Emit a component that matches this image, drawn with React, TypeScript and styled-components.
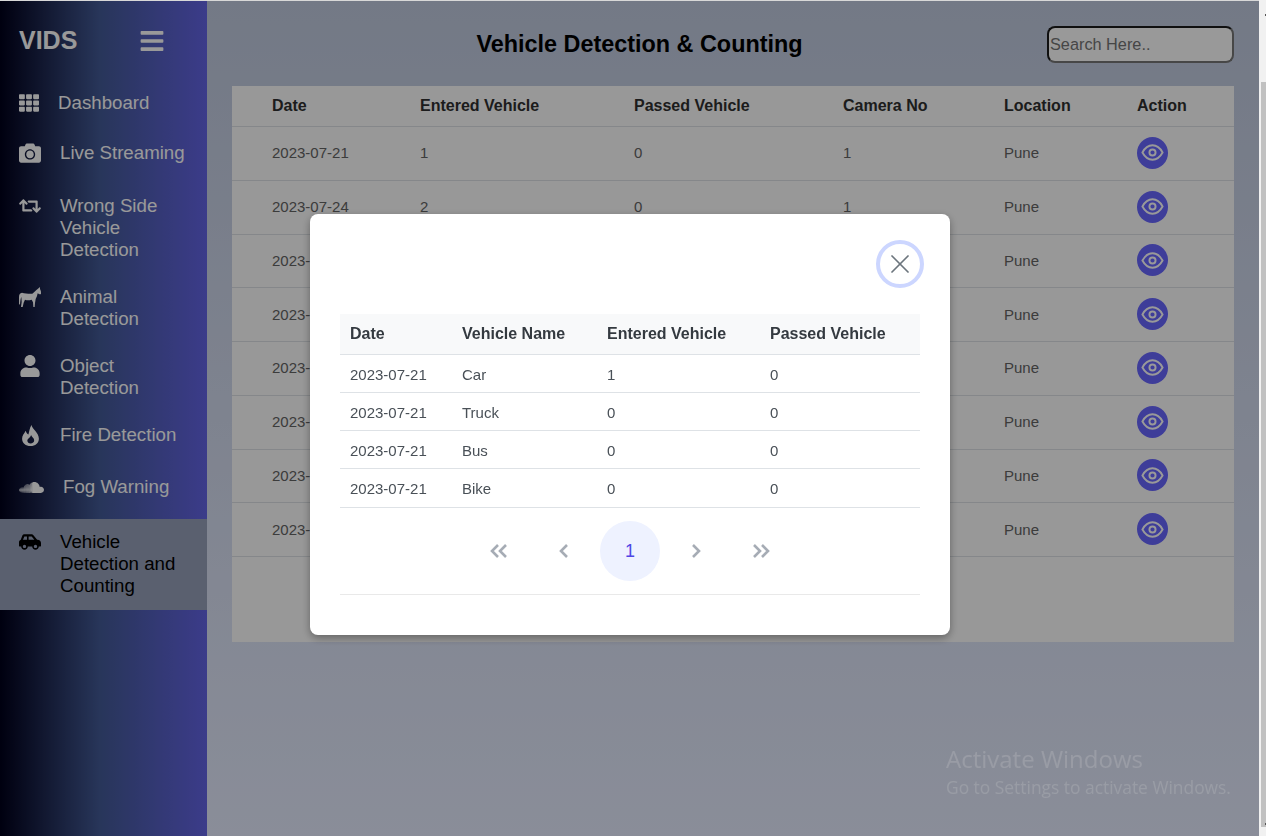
import React from "react";
import styled, { createGlobalStyle } from "styled-components";
import { FaBars, FaCamera, FaCarSide, FaRetweet, FaSoundcloud, FaTh, FaUser } from "react-icons/fa";
import { LuX } from "react-icons/lu";

const GlobalStyle = createGlobalStyle`
  html, body {
    margin: 0;
    height: 100%;
    overflow: hidden;
  }
  body {
    font-family: "Liberation Sans", Arial, sans-serif;
    background: #f1f1f1;
  }
`;

const Page = styled.div`
  display: flex;
  width: 1266px;
  height: 836px;
  overflow: hidden;
`;

const Content = styled.div`
  display: flex;
  flex: 1;
  padding-top: 1px;
  background: #d8d8d8;
`;

const Sidebar = styled.nav`
  width: 207px;
  flex-shrink: 0;
  background: linear-gradient(to right, #00001a 0%, #435a96 48%, #6464e6 100%);
  color: #fff;
`;

const Brand = styled.div`
  display: flex;
  align-items: center;
  justify-content: space-between;
  height: 79px;
  padding: 0 42px 0 19px;
  box-sizing: border-box;
  font-size: 25px;
  font-weight: 700;

  svg {
    font-size: 26px;
  }
`;

const MenuItem = styled.div<{ $iconWidth: number; $height?: number; $active?: boolean }>`
  display: flex;
  gap: 19px;
  box-sizing: border-box;
  height: ${(p) => (p.$height ? `${p.$height}px` : "auto")};
  padding: 12px 20px 13px 19px;
  font-size: 18.7px;
  line-height: 22px;
  color: ${(p) => (p.$active ? "#000" : "#fff")};
  background: ${(p) => (p.$active ? "#97a0ba" : "transparent")};

  > span:first-child {
    display: flex;
    align-items: center;
    justify-content: center;
    flex: 0 0 ${(p) => p.$iconWidth}px;
    height: 22px;
    font-size: ${(p) => p.$iconWidth}px;
  }
`;

const Main = styled.main`
  flex: 1;
  background: linear-gradient(to bottom, #c0cadf 0%, #e6ecff 100%);
  padding: 0 25px;
`;

const TopBar = styled.header`
  display: flex;
  align-items: center;
  height: 85px;
`;

const Title = styled.h1`
  flex: 1;
  margin: 2px 0 0;
  text-align: center;
  font-size: 23.4px;
  font-weight: 700;
  color: #000;
`;

const SearchInput = styled.input`
  width: 187px;
  height: 37px;
  box-sizing: border-box;
  padding: 0 1px;
  margin-top: 2px;
  border: 2px solid;
  border-color: #1c1c1c #777 #777 #1c1c1c;
  border-radius: 8px;
  background: #fff;
  font-family: inherit;
  font-size: 16.3px;
`;

const Panel = styled.section`
  height: 556px;
  background: #fdfdfd;
`;

const VehicleTable = styled.table`
  width: 100%;
  table-layout: fixed;
  border-collapse: separate;
  border-spacing: 0;
  color: #646464;

  th {
    height: 40px;
    text-align: left;
    padding: 0;
    font-size: 16px;
    color: #303030;
    border-bottom: 1px solid #dee2e6;
  }
  td {
    height: 51.75px;
    padding: 0 0 1px;
    font-size: 15px;
    border-bottom: 1px solid #dee2e6;
  }
  th:first-child,
  td:first-child {
    padding-left: 40px;
  }
`;

const EyeButton = styled.button`
  display: flex;
  align-items: center;
  justify-content: center;
  width: 31px;
  height: 32px;
  padding: 0;
  border: none;
  border-radius: 50%;
  background: #6866ff;
  color: #fff;
`;

const ScrollTrack = styled.div`
  position: relative;
  flex: 0 0 7px;
  background: #f1f1f1;
  padding-left: 2px;
  box-sizing: border-box;

  &::before,
  &::after {
    content: "";
    position: absolute;
    right: 0;
    width: 1px;
    height: 2px;
    background: #555;
  }
  &::before {
    top: 14px;
  }
  &::after {
    bottom: 11px;
  }
`;

const ScrollThumb = styled.div`
  height: 745px;
  margin-top: 82px;
  background: #c1c1c1;
`;

const Backdrop = styled.div`
  position: fixed;
  top: 1px;
  left: 0;
  width: 1259px;
  bottom: 0;
  display: flex;
  justify-content: center;
  align-items: flex-start;
  padding-top: 213px;
  box-sizing: border-box;
  background: rgba(0, 0, 0, 0.4);
`;

const Modal = styled.div`
  width: 640px;
  box-sizing: border-box;
  padding: 26px 30px 40px;
  margin-left: 1px;
  background: #fff;
  border-radius: 8px;
  box-shadow: 0 3px 8px rgba(0, 0, 0, 0.35);
`;

const ModalHead = styled.div`
  display: flex;
  justify-content: flex-end;
  margin-bottom: 26px;
`;

const CloseButton = styled.button`
  display: flex;
  align-items: center;
  justify-content: center;
  width: 48px;
  height: 48px;
  margin-right: -4px;
  padding: 0;
  border: 4px solid #ccd6ff;
  border-radius: 50%;
  background: #fff;
  color: #6c757d;
  font-size: 32px;

  svg {
    stroke-width: 1.3;
  }
`;

const DetailTable = styled.table`
  width: 100%;
  table-layout: fixed;
  border-collapse: separate;
  border-spacing: 0;

  th {
    height: 40px;
    padding: 0 0 0 10px;
    text-align: left;
    font-size: 16px;
    color: #343a40;
    background: #f8f9fa;
    border-bottom: 1px solid #dee2e6;
  }
  td {
    height: 36px;
    padding: 1px 0 0 10px;
    font-size: 15px;
    color: #495057;
    border-bottom: 1px solid #dee2e6;
  }
  tr:last-child td {
    height: 38px;
    padding-top: 0;
  }
`;

const Pagination = styled.div`
  display: flex;
  justify-content: center;
  gap: 6px;
  padding: 13px 0;
  border-bottom: 1px solid #e9e9e9;
`;

const PageButton = styled.div<{ $current?: boolean }>`
  display: flex;
  align-items: center;
  justify-content: center;
  width: 60px;
  height: 60px;
  border-radius: 50%;
  font-size: 18px;
  color: ${(p) => (p.$current ? "#4f46e5" : "#a6acb5")};
  background: ${(p) => (p.$current ? "#eef2ff" : "transparent")};
`;

const Watermark = styled.div`
  position: fixed;
  left: 946px;
  top: 743px;
  font-family: "Open Sans", sans-serif;
  font-size: 24px;
  line-height: 31px;
  color: #999ca5;

  small {
    display: block;
    font-size: 17.4px;
    line-height: 26px;
  }
`;

const HorseIcon = () => (
  <svg width="22" height="20" viewBox="0 0 66 60" fill="currentColor">
    <path d="M0 30 C0 22 3 18 9 17 C18 19 30 21 40 20 C46 16 51 10 56 6 L63 0 L63 6 C65 9 66 14 67 19 C66 22 63 23 60 21 L56 19 C55 25 53 31 50 36 L48 48 L47 60 L43 60 L42 46 L38 38 C30 40 24 40 18 38 L14 47 L11 60 L6 60 L8 45 L7 30 C5 34 4 42 3 54 L0 50 Z" />
  </svg>
);

const FlameIcon = () => (
  <svg width="17" height="21" viewBox="0 0 16 20" fill="currentColor" fillRule="evenodd">
    <path d="M9 0 C9.5 4 16 7 16 13 C16 17 12.5 20 8 20 C3.5 20 0 17 0 13 C0 10 2 8 3.5 5.5 C4 7.5 5 8.5 6 9 C7 6 7 3 9 0 Z M8.5 9.5 C8 12 5 13 5 15 C5 16.5 6.5 17.5 8 17.5 C10 17.5 11.5 16.5 11.5 14.5 C11.5 12.5 9.5 11.5 8.5 9.5 Z" />
  </svg>
);

const EyeIcon = () => (
  <svg width="23" height="23" viewBox="0 0 24 24" fill="none" stroke="currentColor" strokeWidth="2">
    <path d="M1.5 12 C5 5.5 9 4.5 12 4.5 C15 4.5 19 5.5 22.5 12 C19 18.5 15 19.5 12 19.5 C9 19.5 5 18.5 1.5 12 Z" />
    <circle cx="12" cy="12" r="3.2" />
  </svg>
);

const Chevron = ({ d }: { d: string }) => (
  <svg width="24" height="24" viewBox="0 0 24 24" fill="none" stroke="currentColor" strokeWidth="2.6">
    <path d={d} />
  </svg>
);

const menu = [
  { label: "Dashboard", icon: <FaTh />, width: 20, height: 50 },
  { label: "Live Streaming", icon: <FaCamera />, width: 22, height: 53 },
  { label: "Wrong Side Vehicle Detection", icon: <FaRetweet />, width: 22 },
  { label: "Animal Detection", icon: <HorseIcon />, width: 22 },
  { label: "Object Detection", icon: <FaUser />, width: 22 },
  { label: "Fire Detection", icon: <FlameIcon />, width: 22, height: 52 },
  { label: "Fog Warning", icon: <FaSoundcloud />, width: 25, height: 55 },
  { label: "Vehicle Detection and Counting", icon: <FaCarSide />, width: 22, active: true },
];

const rows = [
  ["2023-07-21", "1", "0", "1"],
  ["2023-07-24", "2", "0", "1"],
  ["2023-07-25", "0", "0", "1"],
  ["2023-07-26", "0", "0", "1"],
  ["2023-07-27", "0", "0", "1"],
  ["2023-07-28", "0", "0", "1"],
  ["2023-07-31", "0", "0", "1"],
  ["2023-08-01", "0", "0", "1"],
];

const details = [
  ["Car", "1", "0"],
  ["Truck", "0", "0"],
  ["Bus", "0", "0"],
  ["Bike", "0", "0"],
];

export default function App() {
  return (
    <Page>
      <GlobalStyle />
      <Content>
        <Sidebar>
          <Brand>
            VIDS
            <FaBars />
          </Brand>
          {menu.map((item) => (
            <MenuItem key={item.label} $iconWidth={item.width} $height={item.height} $active={item.active}>
              <span>{item.icon}</span>
              <span>{item.label}</span>
            </MenuItem>
          ))}
        </Sidebar>
        <Main>
          <TopBar>
            <Title>Vehicle Detection &amp; Counting</Title>
            <SearchInput placeholder="Search Here.." />
          </TopBar>
          <Panel>
            <VehicleTable>
              <colgroup>
                <col style={{ width: 188 }} />
                <col style={{ width: 214 }} />
                <col style={{ width: 209 }} />
                <col style={{ width: 161 }} />
                <col style={{ width: 133 }} />
                <col />
              </colgroup>
              <thead>
                <tr>
                  <th>Date</th>
                  <th>Entered Vehicle</th>
                  <th>Passed Vehicle</th>
                  <th>Camera No</th>
                  <th>Location</th>
                  <th>Action</th>
                </tr>
              </thead>
              <tbody>
                {rows.map((row) => (
                  <tr key={row[0]}>
                    {row.map((cell, i) => (
                      <td key={i}>{cell}</td>
                    ))}
                    <td>Pune</td>
                    <td>
                      <EyeButton>
                        <EyeIcon />
                      </EyeButton>
                    </td>
                  </tr>
                ))}
              </tbody>
            </VehicleTable>
          </Panel>
        </Main>
      </Content>
      <ScrollTrack>
        <ScrollThumb />
      </ScrollTrack>
      <Backdrop>
        <Modal>
          <ModalHead>
            <CloseButton>
              <LuX />
            </CloseButton>
          </ModalHead>
          <DetailTable>
            <colgroup>
              <col style={{ width: 112 }} />
              <col style={{ width: 145 }} />
              <col style={{ width: 163 }} />
              <col />
            </colgroup>
            <thead>
              <tr>
                <th>Date</th>
                <th>Vehicle Name</th>
                <th>Entered Vehicle</th>
                <th>Passed Vehicle</th>
              </tr>
            </thead>
            <tbody>
              {details.map((row) => (
                <tr key={row[0]}>
                  <td>2023-07-21</td>
                  {row.map((cell, i) => (
                    <td key={i}>{cell}</td>
                  ))}
                </tr>
              ))}
            </tbody>
          </DetailTable>
          <Pagination>
            <PageButton>
              <Chevron d="M12 6 L6 12 L12 18 M20 6 L14 12 L20 18" />
            </PageButton>
            <PageButton>
              <Chevron d="M15 6 L9 12 L15 18" />
            </PageButton>
            <PageButton $current>1</PageButton>
            <PageButton>
              <Chevron d="M9 6 L15 12 L9 18" />
            </PageButton>
            <PageButton>
              <Chevron d="M4 6 L10 12 L4 18 M12 6 L18 12 L12 18" />
            </PageButton>
          </Pagination>
        </Modal>
      </Backdrop>
      <Watermark>
        Activate Windows
        <small>Go to Settings to activate Windows.</small>
      </Watermark>
    </Page>
  );
}
